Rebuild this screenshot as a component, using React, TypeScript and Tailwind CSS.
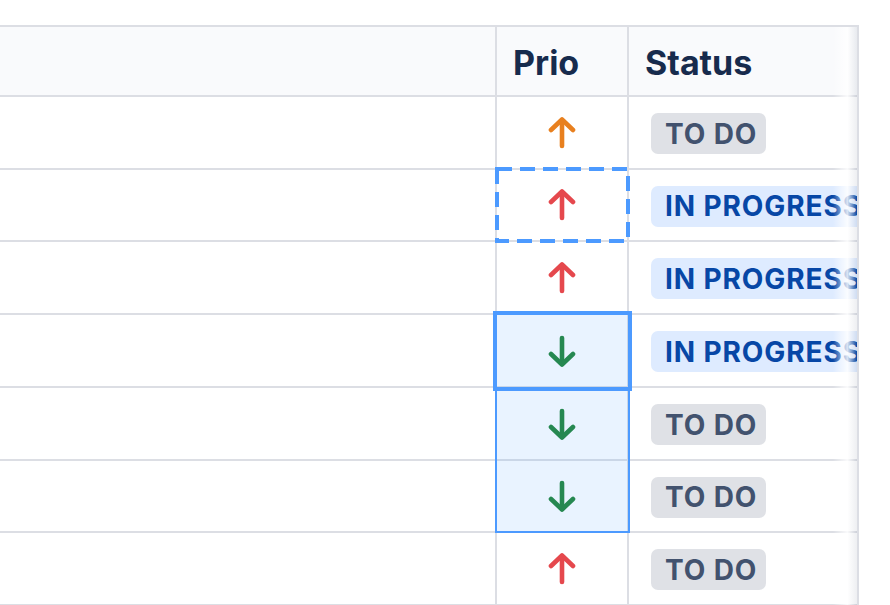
import React from "react";

type Prio = "up-orange" | "up-red" | "down-green";
type Status = "todo" | "progress";

const rows: { prio: Prio; status: Status; h: string }[] = [
  { prio: "up-orange", status: "todo", h: "h-[73px]" },
  { prio: "up-red", status: "progress", h: "h-[72px]" },
  { prio: "up-red", status: "progress", h: "h-[73px]" },
  { prio: "down-green", status: "progress", h: "h-[73px]" },
  { prio: "down-green", status: "todo", h: "h-[73px]" },
  { prio: "down-green", status: "todo", h: "h-[72px]" },
  { prio: "up-red", status: "todo", h: "h-[73px]" },
];

function Arrow({ prio }: { prio: Prio }) {
  const color =
    prio === "up-orange" ? "#E8801F" : prio === "up-red" ? "#E5484D" : "#22863A";
  const up = prio !== "down-green";
  return (
    <svg width="28" height="32" viewBox="0 0 28 32" fill="none">
      {up ? (
        <>
          <path d="M14 3V29" stroke={color} strokeWidth="4.6" strokeLinecap="round" />
          <path d="M3 13L14 2.5L25 13" stroke={color} strokeWidth="4.6" strokeLinecap="round" strokeLinejoin="round" />
        </>
      ) : (
        <>
          <path d="M14 29V3" stroke={color} strokeWidth="4.6" strokeLinecap="round" />
          <path d="M3 19L14 29.5L25 19" stroke={color} strokeWidth="4.6" strokeLinecap="round" strokeLinejoin="round" />
        </>
      )}
    </svg>
  );
}

function Lozenge({ status }: { status: Status }) {
  if (status === "todo") {
    return (
      <span className="inline-flex h-[41px] items-center rounded-[7px] bg-[#dfe1e6] pl-[14px] pr-[9px] text-[28px] font-bold leading-none tracking-[0.9px] whitespace-nowrap text-[#42526e]">
        TO DO
      </span>
    );
  }
  return (
    <span className="inline-flex h-[41px] items-center rounded-[7px] bg-[#deebff] pl-[14px] pr-[9px] text-[28px] font-bold leading-none tracking-[0.9px] whitespace-nowrap text-[#0747a6]">
      IN PROGRESS
    </span>
  );
}

export default function App() {
  return (
    <div
      className="relative h-[605px] w-[890px] overflow-hidden bg-white pt-[25px]"
      style={{ fontFamily: "Inter, 'Noto Sans', sans-serif" }}
    >
      <div className="relative w-[859px] overflow-hidden border-t-2 border-r-2 border-[#dcdee4]">
        {/* header */}
        <div className="flex h-[70px] border-b-2 border-[#dcdee4] bg-[#f9fafc]">
          <div className="w-[495px] shrink-0" />
          <div className="flex w-[132px] shrink-0 items-center border-l-2 border-[#dcdee4] pl-[16px] pt-[2px] text-[34px] font-bold text-[#172b4d]">
            Prio
          </div>
          <div className="flex w-[230px] shrink-0 items-center border-l-2 border-[#dcdee4] pl-[16px] pt-[2px] text-[34px] font-bold text-[#172b4d]">
            Status
          </div>
        </div>
        {rows.map((r, i) => (
          <div key={i} className={`flex ${r.h} border-b-2 border-[#dcdee4] bg-white`}>
            <div className="w-[495px] shrink-0" />
            <div className="flex w-[132px] shrink-0 items-center justify-center border-l-2 border-[#dcdee4]">
              <Arrow prio={r.prio} />
            </div>
            <div className="flex w-[230px] shrink-0 items-center overflow-hidden border-l-2 border-[#dcdee4] pl-[22px] pt-[2px]">
              <Lozenge status={r.status} />
            </div>
          </div>
        ))}
        {/* right scroll shadow */}
        <div className="pointer-events-none absolute top-0 right-0 bottom-0 w-[24px] bg-[linear-gradient(to_right,rgba(255,255,255,0),rgba(255,255,255,0.85)_60%,rgba(9,30,66,0.07))]" />
      </div>

      {/* copy (dashed) marker */}
      <svg
        className="pointer-events-none absolute left-[495px] top-[167px]"
        width="135"
        height="76"
        viewBox="0 0 135 76"
        fill="none"
      >
        <rect x="2" y="2" width="131" height="72" stroke="#4C9AFF" strokeWidth="4" strokeDasharray="15 8" />
      </svg>

      {/* selection range */}
      <div className="pointer-events-none absolute left-[495px] top-[388px] h-[145px] w-[135px] border-2 border-[#4c9aff] bg-[rgba(76,154,255,0.12)]" />
      {/* active cell */}
      <div className="pointer-events-none absolute left-[493px] top-[311px] h-[80px] w-[139px] border-4 border-[#4c9aff] bg-[rgba(76,154,255,0.12)]" />
    </div>
  );
}
